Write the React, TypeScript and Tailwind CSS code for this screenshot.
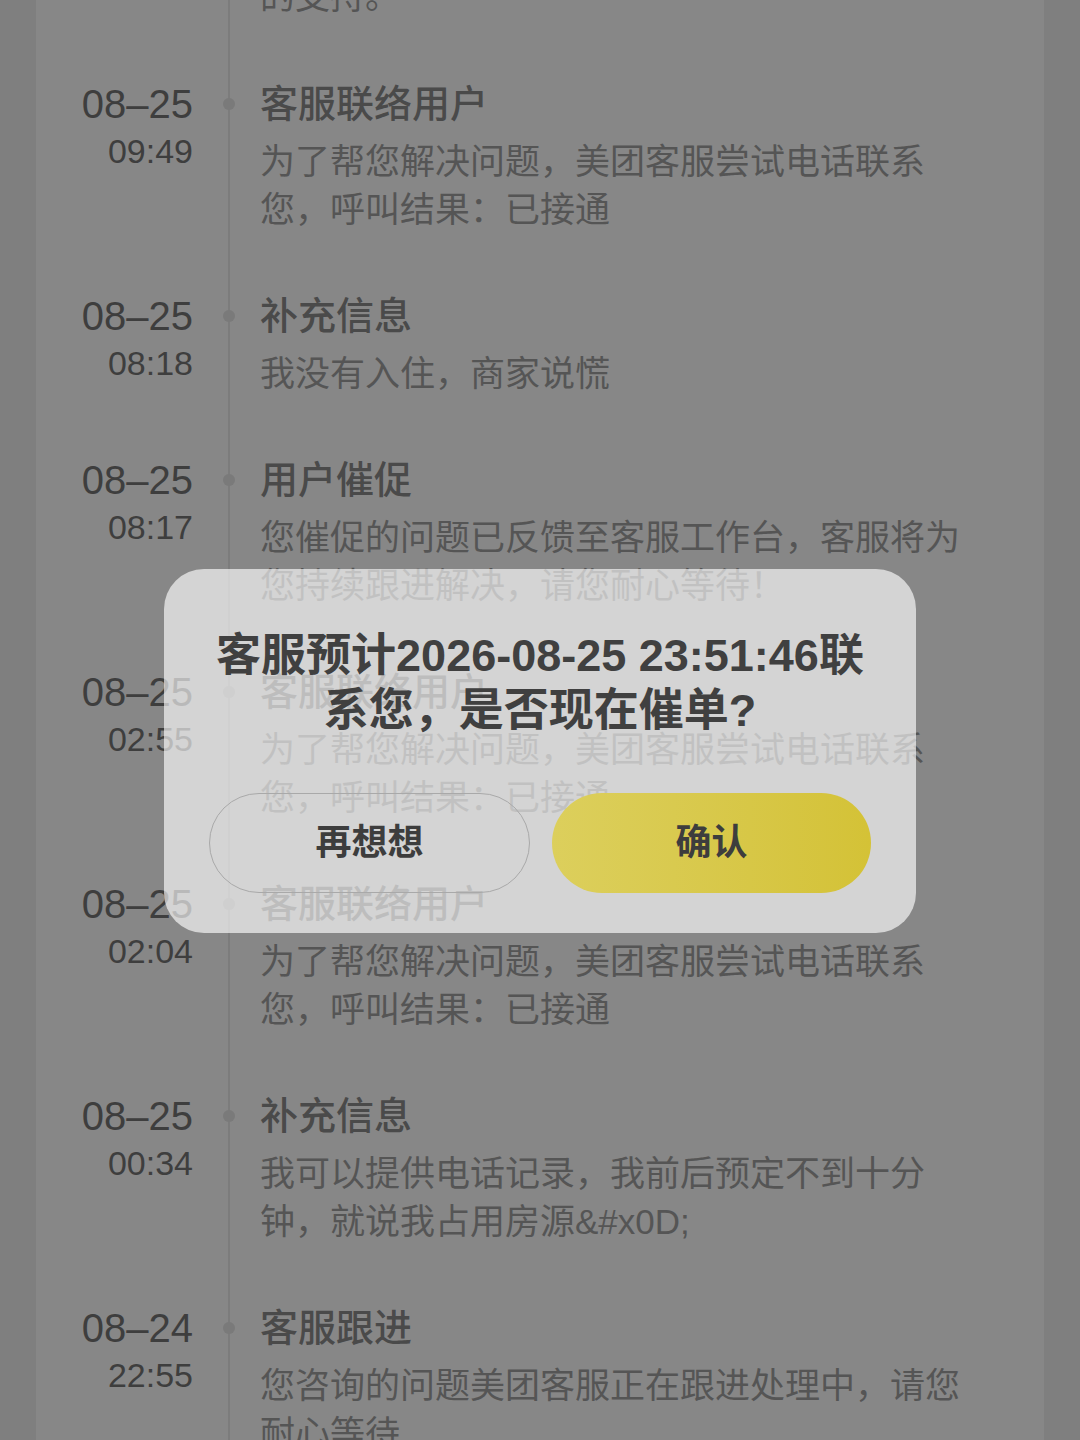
type Entry = {
  date: string
  time: string
  title: string
  lines: string[]
}

const ENTRIES: Entry[] = [
  {
    date: '08–25',
    time: '09:49',
    title: '客服联络用户',
    lines: ['为了帮您解决问题，美团客服尝试电话联系', '您，呼叫结果：已接通'],
  },
  {
    date: '08–25',
    time: '08:18',
    title: '补充信息',
    lines: ['我没有入住，商家说慌'],
  },
  {
    date: '08–25',
    time: '08:17',
    title: '用户催促',
    lines: ['您催促的问题已反馈至客服工作台，客服将为', '您持续跟进解决，请您耐心等待！'],
  },
  {
    date: '08–25',
    time: '02:55',
    title: '客服联络用户',
    lines: ['为了帮您解决问题，美团客服尝试电话联系', '您，呼叫结果：已接通'],
  },
  {
    date: '08–25',
    time: '02:04',
    title: '客服联络用户',
    lines: ['为了帮您解决问题，美团客服尝试电话联系', '您，呼叫结果：已接通'],
  },
  {
    date: '08–25',
    time: '00:34',
    title: '补充信息',
    lines: ['我可以提供电话记录，我前后预定不到十分', '钟，就说我占用房源&#x0D;'],
  },
  {
    date: '08–24',
    time: '22:55',
    title: '客服跟进',
    lines: ['您咨询的问题美团客服正在跟进处理中，请您', '耐心等待'],
  },
]

const FONT = "font-['Liberation_Sans','Noto_Sans_CJK_SC',sans-serif]"

function Row({ entry }: { entry: Entry }) {
  return (
    <div className="flex shrink-0">
      <div className="w-[157px] shrink-0 text-right text-[#3e3e3e]">
        <div className="text-[40px] leading-[56px]">{entry.date}</div>
        <div className="text-[34px] leading-[38px]">{entry.time}</div>
      </div>
      <div className="relative ml-[35px] w-[2px] shrink-0 self-stretch bg-[#7c7c7c]">
        <div className="absolute left-[-5px] top-[22px] h-[12px] w-[12px] rounded-full bg-[#7a7a7a]" />
      </div>
      <div className="ml-[30px] flex-1 pb-[54px]">
        <div className="h-[56px] text-[38px] font-medium leading-[56px] text-[#4a4a4a]">
          {entry.title}
        </div>
        <div className="mt-[6px] text-[35px] leading-[48px] text-[#555555]">
          {entry.lines.map((line) => (
            <div key={line} className="whitespace-nowrap">
              {line}
            </div>
          ))}
        </div>
      </div>
    </div>
  )
}

function ConfirmDialog() {
  return (
    <div className="absolute left-1/2 top-[569px] w-[752px] -translate-x-1/2 rounded-[40px] bg-white/[0.64] px-[45px] pb-[40px] pt-[59px]">
      <div className="text-center text-[45px] font-bold leading-[55px] text-[#404040]">
        <div className="whitespace-nowrap">客服预计2026-08-25 23:51:46联</div>
        <div className="whitespace-nowrap">系您，是否现在催单?</div>
      </div>
      <div className="mt-[55px] flex gap-[22px]">
        <button className="flex h-[100px] flex-1 items-center justify-center rounded-full border-[1.5px] border-[#a9a9a9] text-[36px] font-bold text-[#3d3d3d]">
          再想想
        </button>
        <button className="flex h-[100px] flex-1 items-center justify-center rounded-full bg-gradient-to-r from-[#dccf5c] to-[#d4c236] text-[36px] font-bold text-[#3d3d3d]">
          确认
        </button>
      </div>
    </div>
  )
}

export default function App() {
  return (
    <div className={`relative h-[1440px] w-[1080px] overflow-hidden bg-[#7f7f7f] ${FONT}`}>
      <div className="mx-[36px] flex h-full flex-col overflow-hidden bg-[#878787]">
        {/* tail of the entry above, scrolled mostly out of view */}
        <div className="-mt-[27px] flex shrink-0">
          <div className="w-[157px] shrink-0" />
          <div className="ml-[35px] w-[2px] shrink-0 self-stretch bg-[#7c7c7c]" />
          <div className="ml-[30px] flex-1 pb-[55px] text-[35px] leading-[48px] text-[#555555]">
            的支持。
          </div>
        </div>
        {ENTRIES.map((entry, i) => (
          <Row key={i} entry={entry} />
        ))}
      </div>
      <ConfirmDialog />
    </div>
  )
}
